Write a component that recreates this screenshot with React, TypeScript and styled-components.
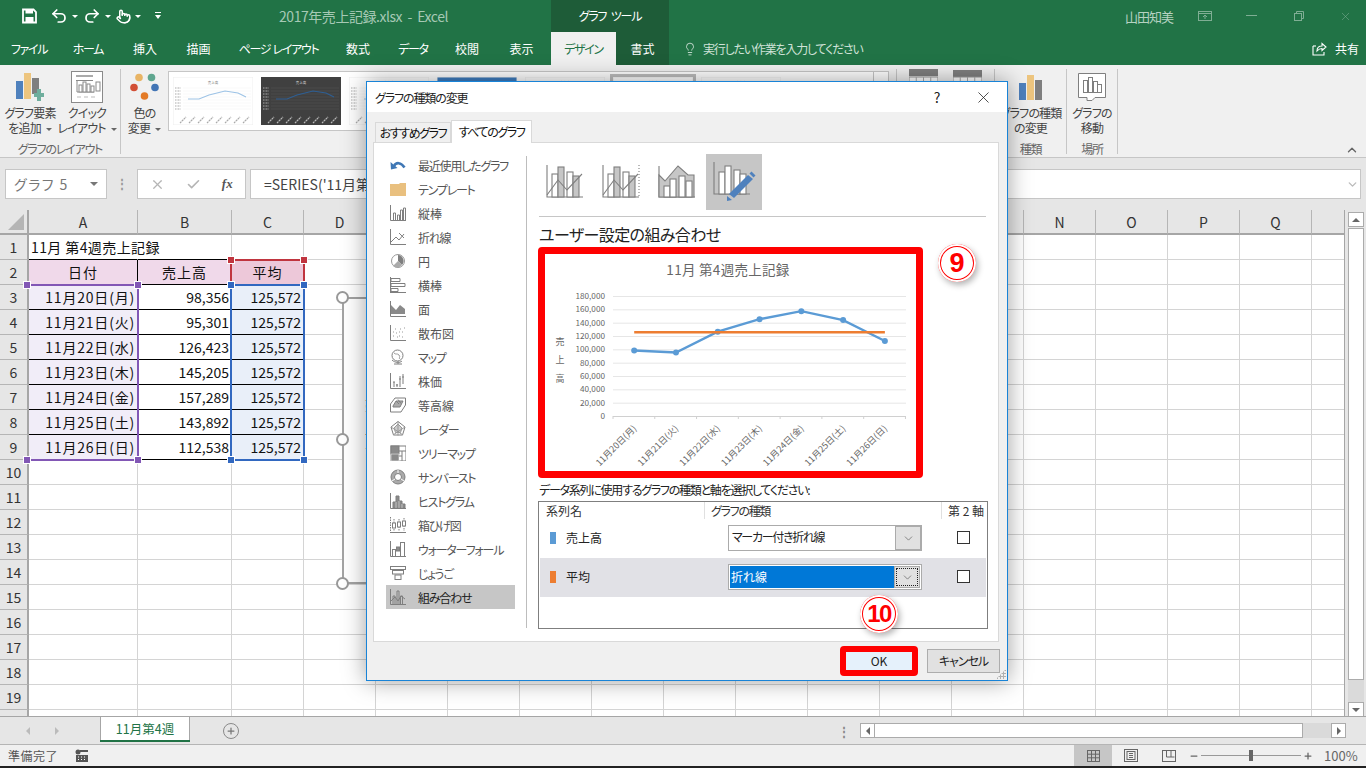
import React from "react";
import styled, { createGlobalStyle } from "styled-components";
import { Undo2, Redo2, Pointer, Lightbulb, X, ChevronDown, ChevronUp, Check, Plus, Minus } from "lucide-react";

const FONT = `"Noto Sans CJK JP", "Noto Sans", "Liberation Sans", sans-serif`;

const Global = createGlobalStyle`
  html, body { margin: 0; padding: 0; width: 1366px; height: 768px; overflow: hidden; background: #000; }
  body { font-family: ${FONT}; font-size: 12px; color: #444; font-feature-settings: "palt"; }
  * { box-sizing: border-box; }
`;

const Page = styled.div`
  position: relative; width: 1366px; height: 768px; overflow: hidden; display: flex; flex-direction: column;
  background: #f0f0f0;
`;
const Tight = styled.span<{ $ls?: number }>`
  letter-spacing: ${(p) => p.$ls ?? -1.2}px;
`;

/* ---------- title bar ---------- */
const TitleBar = styled.div`
  height: 32px; background: #217346; display: flex; align-items: center; color: #fff; flex: none;
`;
const Qat = styled.div`
  width: 279px; display: flex; align-items: center; padding-left: 22px; flex: none;
`;
const QatItem = styled.span<{ $w: number }>`
  width: ${(p) => p.$w}px; flex: none; display: flex; align-items: center; gap: 1px;
`;
const Caret = styled.span<{ $c?: string }>`
  width: 0; height: 0; border: 3px solid transparent; border-top: 3px solid ${(p) => p.$c || "#fff"}; border-bottom: 0;
  display: inline-block; margin-left: 3px; vertical-align: middle;
`;
const FileName = styled.div`
  width: 272px; flex: none; color: #a6c9b5; font-size: 14px; font-feature-settings: normal; letter-spacing: -0.45px; line-height: 32px;
`;
const ToolTitle = styled.div`
  width: 118px; flex: none; height: 32px; background: #1e5c38; color: #fff; text-align: center; line-height: 32px; font-size: 12px; letter-spacing: -1.2px; word-spacing: 3px;
`;
const UserName = styled.div`
  margin-left: 456px; width: 56px; flex: none; color: #b5d2c1; font-size: 13px; font-feature-settings: normal; letter-spacing: -1px;
`;
const WinButton = styled.div`
  width: 47px; flex: none; display: flex; justify-content: center; align-items: center; color: #7fae94;
`;

/* ---------- tabs ---------- */
const TabBar = styled.div`
  height: 33px; background: #217346; display: flex; flex: none; align-items: stretch; position: relative;
`;
const Tab = styled.div<{ $w: number; $active?: boolean; $dark?: boolean; $tight?: boolean }>`
  width: ${(p) => p.$w}px; flex: none; text-align: center; line-height: 34px; font-size: 12px; white-space: nowrap;
  letter-spacing: ${(p) => (p.$tight ? "-1.3px" : "0")}; word-spacing: 1px;
  color: ${(p) => (p.$active ? "#217346" : "#fff")};
  background: ${(p) => (p.$active ? "#f0f0f0" : p.$dark ? "#1e5c38" : "transparent")};
`;
const TellMe = styled.div`
  display: flex; align-items: center; gap: 6px; margin-left: 14px; color: #cfe2d7; font-size: 12px; white-space: nowrap; letter-spacing: -1.2px;
`;
const Share = styled.div`
  margin-left: auto; width: 54px; display: flex; align-items: center; gap: 8px; color: #fff; font-size: 12px;
`;

/* ---------- ribbon ---------- */
const Ribbon = styled.div`
  height: 93px; flex: none; display: flex; background: #f0f0f0; border-bottom: 1px solid #c6c6c6; position: relative;
`;
const Group = styled.div<{ $w: number }>`
  width: ${(p) => p.$w}px; flex: none; margin-top: 4px; height: 85px; border-right: 1px solid #c6c6c6;
  display: flex; flex-direction: column; position: relative;
`;
const GroupBody = styled.div`
  height: 73px; display: flex; align-items: flex-start; flex: none;
`;
const GroupLabel = styled.div`
  height: 14px; text-align: center; font-size: 12px; line-height: 14px; color: #666; letter-spacing: -1.2px; white-space: nowrap;
`;
const BigButton = styled.div<{ $w: number }>`
  width: ${(p) => p.$w}px; flex: none; display: flex; flex-direction: column; align-items: center; text-align: center;
  color: #444; font-size: 12px; line-height: 15px; white-space: nowrap; letter-spacing: -0.8px;
`;
const IconSlot = styled.div`
  height: 36px; display: flex; align-items: center; justify-content: center; flex: none;
`;
const Gallery = styled.div`
  width: 721px; height: 60px; flex: none; margin-top: 2px; background: #fff; border: 1px solid #c6c6c6;
  display: flex; align-items: flex-start; padding: 5px 0 0 4px; gap: 8px; overflow: hidden; position: relative;
`;
const Thumb = styled.div<{ $sel?: boolean }>`
  width: 80px; height: 48px; flex: none; position: relative;
  ${(p) => (p.$sel ? "outline: 3px solid #bdbdbd; outline-offset: 0;" : "")}
`;
const GalleryScroll = styled.div`
  position: absolute; right: 0; top: 0; bottom: 0; width: 15px; border-left: 1px solid #c6c6c6; background: #fff;
`;
const Collapse = styled.div`
  position: absolute; right: 7px; bottom: 0; color: #666; height: 14px;
`;

/* ---------- formula bar ---------- */
const FormulaBar = styled.div`
  height: 52px; flex: none; background: #e6e6e6; display: flex; padding: 11px 5px 0 5px; align-items: flex-start;
`;
const NameBox = styled.div`
  width: 102px; height: 30px; background: #fff; border: 1px solid #c6c6c6; display: flex; align-items: center;
  justify-content: space-between; padding: 0 8px; color: #777; font-size: 14px; letter-spacing: 1.5px; flex: none;
`;
const Dots = styled.div`
  width: 30px; flex: none; text-align: center; line-height: 28px; color: #999; font-weight: 700;
`;
const FxBox = styled.div`
  width: 109px; height: 30px; flex: none; background: #fff; border: 1px solid #c6c6c6; display: flex; align-items: center;
  justify-content: space-around; color: #b5b5b5; padding: 0 2px;
`;
const Fx = styled.span`
  font-family: "Liberation Serif", serif; font-style: italic; font-weight: 700; color: #555; font-size: 13px;
`;
const FormulaInput = styled.div`
  margin-left: 4px; flex: 1; height: 30px; background: #fff; border: 1px solid #c6c6c6; display: flex; align-items: center;
  padding: 0 1px 0 13px; font-size: 14px; color: #444; justify-content: space-between; font-feature-settings: normal;
`;

/* ---------- sheet ---------- */
const SheetArea = styled.div`
  height: 507px; flex: none; display: flex; background: #e6e6e6; position: relative;
`;
const Grid = styled.div`
  width: 1345px; flex: none; height: 507px; overflow: hidden; background: #fff; position: relative;
  display: grid; grid-template-columns: 29px 109px 94px repeat(15, 72px) 33px; grid-auto-rows: 25px;
  border-right: 1px solid #a6a6a6; border-bottom: 1px solid #a6a6a6;
`;
const Corner = styled.div`
  background: #e6e6e6; border-right: 2px solid #a6a6a6; border-bottom: 2px solid #a6a6a6; position: relative;
  &::after { content: ""; position: absolute; right: 3px; bottom: 3px; border: 8px solid #b5b5b5; border-left-color: transparent; border-top-color: transparent; }
`;
const ColHead = styled.div`
  background: #e6e6e6; border-right: 1px solid #b5b5b5; border-bottom: 2px solid #a6a6a6; text-align: center; line-height: 24px;
  font-size: 14px; color: #333; font-feature-settings: normal;
`;
const RowHead = styled.div`
  background: #e6e6e6; border-right: 2px solid #a6a6a6; border-bottom: 1px solid #b5b5b5; text-align: center; line-height: 24px;
  font-size: 14px; color: #333; font-feature-settings: normal;
`;
const Cell = styled.div<{ $bg?: string; $align?: string; $black?: boolean; $blackRight?: boolean; $ls?: number; $over?: boolean }>`
  background: ${(p) => p.$bg || "#fff"};
  border-right: 1px solid ${(p) => (p.$blackRight ? "#000" : "#d4d4d4")};
  border-bottom: 1px solid ${(p) => (p.$black ? "#000" : "#d4d4d4")};
  text-align: ${(p) => p.$align || "left"};
  letter-spacing: ${(p) => p.$ls ?? 0}px;
  ${(p) => (p.$over ? "position: relative; z-index: 1; border-right-color: transparent; background: transparent;" : "")}
  font-size: 14px; line-height: 24px; color: #111; white-space: nowrap; padding: 0 2px; font-feature-settings: normal;
`;
const Range = styled.div<{ $l: number; $t: number; $w: number; $h: number; $c: string; $noLeft?: boolean }>`
  position: absolute; left: ${(p) => p.$l}px; top: ${(p) => p.$t}px; width: ${(p) => p.$w}px; height: ${(p) => p.$h}px;
  z-index: 2; border: 2px solid ${(p) => p.$c}; ${(p) => (p.$noLeft ? "border-left-width: 0;" : "")}
`;
const RangeHandle = styled.div<{ $x: "l" | "r"; $y: "t" | "b"; $c: string }>`
  position: absolute; background: ${(p) => p.$c}; border: 1px solid #fff; box-sizing: content-box;
  ${(p) => (p.$x === "l" ? "left: -5px;" : "right: -5px;")}
  ${(p) => (p.$y === "t" ? "top: -5px;" : "bottom: -5px;")}
  width: 6px; height: 6px;
`;
const ChartObject = styled.div`
  position: absolute; left: 342px; top: 87px; width: 640px; height: 287px; background: #fff; border: 2px solid #a3a3a3; z-index: 2;
`;
const ChartHandle = styled.div<{ $t: number }>`
  position: absolute; left: -8px; top: ${(p) => p.$t}px; width: 13px; height: 13px; border-radius: 50%; background: #fff; border: 2px solid #999;
`;
const ChartAxisText = styled.div`
  position: absolute; left: 18px; top: 100px; writing-mode: vertical-rl; font-size: 13px; letter-spacing: 11px; color: #555;
`;
const VScroll = styled.div`
  width: 21px; flex: none; padding: 2px 2px 0 3px; display: flex; flex-direction: column; height: 507px;
`;
const ScrollBtn = styled.div`
  height: 15px; flex: none; background: #fff; border: 1px solid #ababab; display: flex; align-items: center; justify-content: center;
`;
const Tri = styled.span<{ $dir: "up" | "down" | "left" | "right"; $c?: string }>`
  width: 0; height: 0; border: 4px solid transparent; display: inline-block;
  ${(p) => {
    const c = p.$c || "#666";
    if (p.$dir === "up") return `border-top-width:0;border-bottom-color:${c};`;
    if (p.$dir === "down") return `border-bottom-width:0;border-top-color:${c};`;
    if (p.$dir === "left") return `border-left-width:0;border-right-color:${c};`;
    return `border-right-width:0;border-left-color:${c};`;
  }}
`;
const VThumb = styled.div`
  height: 452px; flex: none; margin-top: 1px; background: #fff; border: 1px solid #ababab;
`;
const VTrack = styled.div`
  flex: 1; background: #dadada;
`;

/* ---------- sheet tabs ---------- */
const SheetTabs = styled.div`
  height: 29px; flex: none; background: #e6e6e6; border-bottom: 1px solid #b5b5b5; display: flex; align-items: flex-start; margin-top: -1px; position: relative;
`;
const NavArrows = styled.div`
  width: 100px; height: 28px; display: flex; align-items: center; padding-left: 26px; gap: 25px; flex: none; border-top: 1px solid #a6a6a6;
`;
const SheetTab = styled.div`
  width: 90px; height: 24px; flex: none; background: #fff; border: 1px solid #a6a6a6; border-bottom: 0; color: #217346;
  text-align: center; font-size: 12.5px; line-height: 24px; box-shadow: 0 2px 0 #217346; font-feature-settings: normal;
`;
const TabsRest = styled.div`
  flex: 1; height: 28px; border-top: 1px solid #a6a6a6; display: flex; align-items: center;
`;
const AddSheet = styled.div`
  margin-left: 33px; width: 16px; height: 16px; border-radius: 50%; border: 1.5px solid #8a8a8a; color: #777; display: flex; align-items: center; justify-content: center;
`;
const SplitDots = styled.div`
  margin-left: 597px; width: 16px; color: #888; font-weight: 700; line-height: 14px; text-align: center;
`;
const HScroll = styled.div`
  width: 486px; margin-left: 8px; height: 15px; display: flex; align-items: stretch; flex: none;
`;
const HBtn = styled.div`
  width: 15px; flex: none; background: #fff; border: 1px solid #ababab; display: flex; align-items: center; justify-content: center;
`;
const HThumb = styled.div`
  width: 428px; flex: none; background: #fff; border: 1px solid #ababab; border-left: 0;
`;
const HTrack = styled.div`
  width: 28px; flex: none; background: #dadada;
`;

/* ---------- status bar ---------- */
const StatusBar = styled.div`
  height: 21px; flex: none; background: #f0f0f0; display: flex; align-items: center; padding-left: 8px; color: #555; font-size: 12px;
`;
const ReadyText = styled.div`
  width: 67px; flex: none; font-feature-settings: normal; letter-spacing: 0.5px;
`;
const ViewGroup = styled.div`
  margin-left: 985px; display: flex; flex: none;
`;
const ViewBtn = styled.div<{ $active?: boolean }>`
  width: 38px; height: 21px; flex: none; display: flex; align-items: center; justify-content: center;
  background: ${(p) => (p.$active ? "#c6c6c6" : "transparent")};
`;
const ZoomGroup = styled.div`
  margin-left: 1px; display: flex; align-items: center; color: #666; flex: none;
`;
const ZoomSlider = styled.div`
  width: 100px; height: 1px; background: #999; margin: 0 2px 0 2px; position: relative; flex: none;
`;
const ZoomKnob = styled.div`
  position: absolute; left: 48px; top: -5px; width: 4px; height: 11px; background: #666;
`;
const ZoomText = styled.div`
  margin-left: 11px; font-size: 13px; color: #666; font-feature-settings: normal;
`;
const BottomEdge = styled.div`
  height: 2px; flex: none; background: #222;
`;

/* ---------- dialog ---------- */
const Dialog = styled.div`
  position: absolute; left: 366px; top: 81px; width: 642px; height: 600px; background: #f0f0f0; border: 1px solid #1883d7;
  box-shadow: 0 0 22px rgba(0, 0, 0, 0.38); display: flex; flex-direction: column; z-index: 5;
`;
const DialogTitle = styled.div`
  height: 30px; flex: none; background: #fff; display: flex; align-items: center; padding-left: 8px; font-size: 12px; color: #222; position: relative;
`;
const DialogHelp = styled.div`
  margin-left: auto; width: 46px; text-align: center; font-size: 14px; color: #222;
`;
const DialogClose = styled.div`
  width: 46px; display: flex; justify-content: center; color: #222; margin-right: 1px;
`;
const DialogTabs = styled.div`
  height: 30px; flex: none; display: flex; align-items: flex-end; padding-left: 8px; position: relative; z-index: 1;
`;
const DialogTab = styled.div<{ $active?: boolean }>`
  height: ${(p) => (p.$active ? 23 : 20)}px; font-size: 12px; line-height: ${(p) => (p.$active ? 22 : 20)}px; letter-spacing: -1.4px;
  color: #111; background: ${(p) => (p.$active ? "#fff" : "#f0f0f0")}; text-align: center; white-space: nowrap;
  border: 1px solid #d9d9d9; border-bottom: 0;
  width: ${(p) => (p.$active ? 81 : 76)}px; margin-bottom: ${(p) => (p.$active ? -1 : 0)}px;
`;
const DialogPanel = styled.div`
  height: 500px; flex: none; margin: 0 8px 0 6px; background: #fff; border: 1px solid #d9d9d9; display: flex;
`;
const ListColumn = styled.div`
  width: 152px; flex: none; padding: 10px 0 0 12px;
`;
const ListItem = styled.div<{ $sel?: boolean }>`
  width: 129px; height: 24px; display: flex; align-items: center; gap: 12px; padding-left: 4px;
  background: ${(p) => (p.$sel ? "#c6c6c6" : "transparent")}; color: ${(p) => (p.$sel ? "#222" : "#555")};
  font-size: 12px; white-space: nowrap;
  & > svg { flex: none; }
`;
const VDivider = styled.div`
  width: 1px; flex: none; margin: 13px 0; background: #bdbdbd;
`;
const RightColumn = styled.div`
  flex: 1; min-width: 0; padding: 11px 12px 0 12px; position: relative;
`;
const TypeRow = styled.div`
  height: 56px; display: flex; margin-left: -1px;
`;
const TypeButton = styled.div<{ $sel?: boolean }>`
  width: 56px; height: 56px; flex: none; display: flex; align-items: center; justify-content: center;
  background: ${(p) => (p.$sel ? "#c6c6c6" : "transparent")};
`;
const HRule = styled.div`
  height: 1px; margin-top: 6px; background: #c6c6c6;
`;
const Heading = styled.div`
  margin-top: 7px; height: 20px; line-height: 20px; font-size: 16px; color: #222; white-space: nowrap; letter-spacing: -0.6px;
`;
const Preview = styled.div`
  margin: 3px 0 0 -1px; width: 385px; height: 231px; border: 7px solid #ff0000; border-radius: 4px; background: #fff; flex: none;
  & > svg { display: block; }
`;
const Badge = styled.div<{ $l: number; $t: number; $small?: boolean }>`
  position: absolute; left: ${(p) => p.$l}px; top: ${(p) => p.$t}px; width: 38px; height: 38px; border-radius: 50%;
  background: #fff; box-shadow: inset 0 0 0 2px #fff, inset 0 0 0 3px #ff0000, 2px 3px 6px rgba(0, 0, 0, 0.3);
  font-family: "Liberation Sans", sans-serif; font-weight: 700; text-align: center; line-height: 38px;
  font-size: ${(p) => (p.$small ? 24 : 27)}px; letter-spacing: ${(p) => (p.$small ? -1.5 : 0)}px; color: #f00;
  z-index: 3;
`;
const SeriesLabel = styled.div`
  margin-top: 4px; height: 16px; line-height: 16px; font-size: 12px; color: #222; white-space: nowrap; letter-spacing: -1.25px;
`;
const SeriesTable = styled.div`
  margin: 3px 0 0 -1px; width: 450px; height: 128px; border: 1px solid #7f7f7f; font-size: 12px; color: #333;
`;
const SeriesHeader = styled.div`
  height: 17px; display: grid; grid-template-columns: 165px 237px 46px; line-height: 17px; white-space: nowrap;
`;
const HeaderCell = styled.div<{ $sep?: boolean; $pl: number }>`
  padding-left: ${(p) => p.$pl}px; ${(p) => (p.$sep ? "border-left: 1px solid #e0e0e0;" : "")}
`;
const SeriesRow = styled.div<{ $sel?: boolean }>`
  height: 39px; margin: 0 1px; display: grid; grid-template-columns: 164px 237px 45px; align-items: center;
  background: ${(p) => (p.$sel ? "#e1e1e6" : "transparent")};
`;
const SeriesName = styled.div`
  display: flex; align-items: center; gap: 10px; padding-left: 10px; color: #222; margin-bottom: 2px;
`;
const Swatch = styled.span<{ $c: string }>`
  width: 6px; height: 12px; background: ${(p) => p.$c}; flex: none;
`;
const Combo = styled.div<{ $sel?: boolean }>`
  margin: 0 0 1px 24px; width: 194px; height: 26px; border: 1px solid #ababab; display: flex; background: #fff;
  padding: ${(p) => (p.$sel ? "1px" : "0")};
  font-size: 12px;
`;
const ComboText = styled.div<{ $sel?: boolean }>`
  flex: 1; line-height: ${(p) => (p.$sel ? 21 : 22)}px; padding-left: ${(p) => (p.$sel ? 1 : 3)}px;
  background: ${(p) => (p.$sel ? "#0078d7" : "#fff")}; color: ${(p) => (p.$sel ? "#fff" : "#222")};
`;
const ComboBtn = styled.div<{ $focus?: boolean }>`
  width: 26px; flex: none; background: #e1e1e1; border: 1px solid #ababab; display: flex; align-items: center; justify-content: center; color: #555;
  ${(p) => (p.$focus ? "outline: 1px dotted #222; outline-offset: -3px;" : "")}
`;
const CheckBox = styled.div`
  width: 13px; height: 13px; background: #fff; border: 1px solid #333; justify-self: center; margin-bottom: 3px;
`;
const DialogFooter = styled.div`
  flex: 1; display: flex; justify-content: flex-end; align-items: center; padding-right: 7px; gap: 9px; position: relative;
`;
const OkButton = styled.div`
  width: 78px; height: 30px; background: #e5f1fb; border: 6px solid #ff0000; border-radius: 4px; text-align: center; line-height: 18px; color: #222; font-size: 12px;
`;
const CancelButton = styled.div`
  width: 73px; height: 24px; background: #e1e1e1; border: 1px solid #adadad; text-align: center; line-height: 22px; color: #222; font-size: 12px; letter-spacing: -1px;
`;
const Grip = styled.div`
  position: absolute; right: 1px; bottom: 1px; width: 10px; height: 10px;
  background-image: radial-gradient(#b0b0b0 1px, transparent 1.2px); background-size: 3px 3px;
  clip-path: polygon(100% 0, 100% 100%, 0 100%);
`;
const ChartSvg = styled.svg`
  font-family: ${FONT}; font-feature-settings: normal;
`;

/* ---------- icons ---------- */
const SaveIcon = () => (
  <svg width="15" height="16" viewBox="0 0 15 16" fill="none">
    <path d="M1 1.5h10.5L14 4v10.5H1z" stroke="#fff" strokeWidth="1.8" />
    <rect x="3.5" y="1.5" width="7.5" height="4" fill="#fff" />
    <rect x="3.5" y="9" width="8" height="5.5" fill="#fff" />
  </svg>
);
const QatMore = () => (
  <svg width="8" height="8" viewBox="0 0 8 8"><rect x="1" y="0" width="6" height="1" fill="#fff" /><path d="M1 3h6L4 7z" fill="#fff" /></svg>
);
const ShareIcon = () => (
  <svg width="15" height="15" viewBox="0 0 15 15" fill="none" stroke="#fff" strokeWidth="1.1">
    <path d="M1 5v9h11v-3" /><path d="M1 5h3" /><path d="M5 10c0-3.500 2-5 5-5V2.500L14 6l-4 3.500V7.500c-2 0-3.500.8-5 2.500z" />
  </svg>
);
const AddElementIcon = () => (
  <svg width="30" height="28" viewBox="0 0 30 28">
    <rect x="1" y="8" width="7" height="18" fill="#4f81bd" /><rect x="9" y="0" width="7" height="26" fill="#edc57f" />
    <rect x="17" y="5" width="7" height="16" fill="#7f7f7f" /><path d="M19 20h3v-4h4v4h3v4h-3v4h-4v-4h-3z" fill="#6fae9d" />
  </svg>
);
const QuickLayoutIcon = () => (
  <svg width="33" height="33" viewBox="0 0 33 33" fill="#fff" stroke="#8a8a8a">
    <rect x=".5" y=".5" width="31" height="31" /><path d="M5 5h17" strokeWidth="2" stroke="#aaa" />
    <path d="M5 9.500h17M6 10v11M6 21h17" /><rect x="8" y="14" width="3" height="7" /><rect x="12" y="11" width="3" height="10" /><rect x="16" y="13" width="3" height="8" /><rect x="20" y="15" width="3" height="6" />
    <rect x="25" y="11" width="4" height="9" /><path d="M6 26h4M13 26h4M20 26h4" stroke="#bbb" />
  </svg>
);
const PaletteIcon = () => (
  <svg width="30" height="28" viewBox="0 0 30 28">
    <circle cx="9" cy="4.500" r="3.800" fill="#e8b465" /><circle cx="21.500" cy="4.500" r="3.800" fill="#5fa68f" />
    <circle cx="4" cy="14.500" r="3.800" fill="#d24f35" /><circle cx="25" cy="14.500" r="3.800" fill="#4275b5" /><circle cx="14.500" cy="23" r="3.800" fill="#e37a26" />
  </svg>
);
const ChangeTypeIcon = () => (
  <svg width="24" height="27" viewBox="0 0 24 27">
    <rect y="9" width="7" height="17" fill="#4f81bd" /><rect x="8" y="1" width="7" height="25" fill="#edc57f" /><rect x="16" y="6" width="7" height="20" fill="#7f7f7f" />
  </svg>
);
const MoveChartIcon = () => (
  <svg width="29" height="29" viewBox="0 0 29 29" fill="#fff" stroke="#7f7f7f">
    <path d="M.5 .5h27v24H17l-3 3H9v-3H.500z" /><rect x="5.500" y="7.500" width="4" height="12" /><rect x="10.500" y="4.500" width="4" height="15" /><rect x="15.500" y="8.500" width="4" height="11" /><rect x="19.500" y="11.500" width="4" height="8" />
  </svg>
);
const TableIcon = ({ w, arrow }: { w: number; arrow?: boolean }) => (
  <svg width={w} height="30" viewBox={`0 0 ${w} 30`}>
    <rect width={w} height="7" y={arrow ? 0 : 1} fill="#7f7f7f" />
    <rect y="8" width={w} height="22" fill="#fff" stroke="#999" />
    <path d={`M${w / 4} 8v22M${w / 2} 8v22M${(w * 3) / 4} 8v22`} stroke="#aaa" />
  </svg>
);
const MiniChart = ({ dark, color, bg }: { dark?: boolean; color: string; bg?: string }) => (
  <svg width="80" height="48" viewBox="0 0 80 48">
    <rect width="80" height="48" fill={bg || (dark ? "#404040" : "#fff")} stroke={dark ? "none" : "#eee"} />
    <text x="40" y="7" fontSize="3.500" textAnchor="middle" fill={dark ? "#ddd" : "#777"} fontFamily={FONT}>売上高</text>
    {[11, 14, 17, 20, 23, 26, 29, 32].map((y) => (
      <g key={y}>
        <path d={`M2 ${y}h6`} stroke="#aaa" strokeWidth="1.200" strokeDasharray="1 .5" />
        <path d={`M10 ${y}h68`} stroke={dark ? "#555" : "#f0f0f0"} strokeWidth=".5" />
      </g>
    ))}
    <path d="M15 22 L26 22 L36 18 L52 14 L65 16 L73 20" stroke={color} strokeWidth="1.100" fill="none" />
    {[12, 21, 30, 39, 48, 57, 66, 75].map((x) => (
      <path key={x} d={`M${x - 5} 46l6-6`} stroke={dark ? "#bbb" : "#aaa"} strokeWidth="1.200" strokeDasharray="2 .6" />
    ))}
  </svg>
);

const IconFrame = ({ children }: { children: React.ReactNode }) => (
  <svg width="16" height="16" viewBox="0 0 16 16" fill="none" stroke="#7f7f7f" strokeWidth="1">{children}</svg>
);
const axis = <path d="M.5 0v15.500H16" />;
const icons: Record<string, React.ReactNode> = {
  recent: <><path d="M4 9C6 5 11 5 14.500 10.500" stroke="#3f77b5" strokeWidth="2.600" /><path d="M.5 5 7.500 11 1 12.500z" fill="#3f77b5" stroke="none" /></>,
  folder: <path d="M0 3h9l1-1h6v13H0z" fill="#e9c07f" stroke="none" />,
  column: <>{axis}<path d="M3.500 15V8h2v7M7.500 15V10h2v5M10.500 15V5h2v10M13.500 15V3h2v12" /></>,
  line: <>{axis}<path d="M1 13l5-5 3 3 5-6M9 4l5 5" /></>,
  pie: <><circle cx="8" cy="8" r="6.500" stroke="#999" /><path d="M8 8V2a6 6 0 0 1 4 10z" fill="#7f7f7f" stroke="none" /><path d="M8 8l4 4a6 6 0 0 1-9 1" fill="#aaa" stroke="none" /></>,
  bar: <><path d="M.5 0v16" /><path d="M1 1.500h9v3H1zM1 6.500h14v3H1zM1 11.500h7v3H1z" fill="#fff" /><path d="M0 15.500h16" /></>,
  area: <><path d="M.5 0v15.500H16" /><path d="M1 4l5 5 4-5 5 4v5H1z" fill="#8a8a8a" stroke="none" /></>,
  scatter: <>{axis}<path d="M3 11h1M6 8h1M9 11h1M12 7h1M5 4h1M10 4h1M14 3h1M3 7h1M7 12h1M12 12h1M9 7h1" stroke="#999" /></>,
  map: <><circle cx="7.500" cy="6.500" r="5.500" /><path d="M4 4c2 2 3 0 5 2s-1 3 1 4" stroke="#999" /><path d="M4 15h8M8 12v3M2 11c3 3 8 3 10 1" /></>,
  stock: <>{axis}<path d="M4 9v5M7 11v3M10 3v11M13 1v10M3 9h2M6 12h2M9 6h2M12 4h2" /></>,
  contour: <><path d="M.5 7 5 1h10.500v7L11 15H.5z" /><path d="M3 9l3-5h7l-3 6H3z" fill="#aaa" stroke="#7f7f7f" /><path d="M6 4l3 3M8 2.500l3 4" /></>,
  radar: <><path d="M8 .5l7 5.500-2.500 8h-9L1 6z" /><path d="M8 3l4 4-1.500 4.500h-5L4 7z" fill="#ccc" stroke="#999" /><path d="M8 .5v14M1 6l12 8M15 6 3 14" stroke="#999" /></>,
  tree: <><rect x="1" y="1" width="15" height="15" fill="#fff" /><rect x="1" y="1" width="8" height="8" fill="#8a8a8a" stroke="#7f7f7f" /><rect x="1" y="9" width="8" height="7" fill="#8a8a8a" stroke="#fff" strokeWidth=".5" /><path d="M9 6h7M12 6v10M9 11h3" /></>,
  sun: <><circle cx="8" cy="8" r="7" fill="#aaa" /><circle cx="8" cy="8" r="3.500" fill="#fff" /><path d="M8 1v3M2 12l3-2M14 12l-3-2" stroke="#fff" /></>,
  hist: <>{axis}<path d="M3 15V9h3V3h3v5h3v3h3v4z" fill="#8a8a8a" /><path d="M6 9v6M9 8v7M12 11v4" stroke="#fff" strokeWidth=".5" /></>,
  box: <><path d="M0 15.500h16" /><path d="M.5 0v15.500M4 2v12M9 2v12M14 1v13" strokeDasharray="1.500 1" /><rect x="2.500" y="6" width="3" height="5" fill="#fff" /><rect x="7.500" y="5" width="3" height="5" fill="#fff" /><rect x="12.500" y="4" width="3" height="5" fill="#fff" /></>,
  water: <>{axis}<rect x="2.500" y="8.500" width="3" height="7" fill="#fff" /><rect x="6.500" y="6" width="3" height="4" fill="#8a8a8a" /><rect x="10.500" y="1.500" width="4" height="14" fill="#fff" /></>,
  funnel: <><rect x=".5" y="1.500" width="15" height="3" /><rect x="2.500" y="5.500" width="11" height="3.500" /><rect x="5" y="10" width="6" height="4.500" /></>,
  combo: <>{axis}<path d="M3 15V7h2v8M7 15V2h2v13M10.500 15V7h2v8" /><path d="M1 12l4-4 3 4 3-5 4 3" /></>,
};
const listItems: [string, string][] = [
  ["recent", "最近使用したグラフ"], ["folder", "テンプレート"], ["column", "縦棒"], ["line", "折れ線"], ["pie", "円"], ["bar", "横棒"],
  ["area", "面"], ["scatter", "散布図"], ["map", "マップ"], ["stock", "株価"], ["contour", "等高線"], ["radar", "レーダー"],
  ["tree", "ツリーマップ"], ["sun", "サンバースト"], ["hist", "ヒストグラム"], ["box", "箱ひげ図"], ["water", "ウォーターフォール"], ["funnel", "じょうご"], ["combo", "組み合わせ"],
];
const hasKana = (s: string) => /[ぁ-んァ-ン]/.test(s);

const ComboTypeIcon = ({ kind }: { kind: number }) => (
  <svg width="40" height="34" viewBox="0 0 40 34" fill="none" stroke="#7f7f7f" strokeWidth="1.100">
    {kind === 2 ? (
      <>
        <path d="M1 1v31h36" />
        <path d="M1 10l6 6L20 1l10 9h6v22H1z" fill="#c6c6c6" />
        <rect x="6" y="21" width="6" height="11" fill="#fff" /><rect x="12" y="14" width="6" height="18" fill="#fff" /><rect x="21" y="11" width="6" height="21" fill="#fff" /><rect x="28" y="16" width="6" height="16" fill="#fff" />
      </>
    ) : (
      <>
        <path d="M1 0v32h36" />
        <rect x="6" y="9" width="6" height="23" fill="#fff" /><rect x="12" y="2" width="6" height="30" fill="#c6c6c6" /><rect x="21" y="7" width="6" height="25" fill="#fff" /><rect x="27" y="11" width="6" height="21" fill="#c6c6c6" />
        <path d="M1 30l11-15 9 10 15-16" />
        {kind === 1 && <path d="M37 0v32" strokeDasharray="1 2" />}
      </>
    )}
  </svg>
);
const CustomComboIcon = () => (
  <svg width="44" height="42" viewBox="0 0 44 42" fill="none" stroke="#7f7f7f" strokeWidth="1.100">
    <path d="M2 1v32h36" /><rect x="7" y="11" width="6" height="22" fill="#fff" /><rect x="13" y="5" width="6" height="28" fill="#fff" /><rect x="22" y="9" width="6" height="24" fill="#fff" /><rect x="28" y="13" width="6" height="20" fill="#fff" />
    <path d="M17 33 36 14l5 4L22 37z" fill="#4f81bd" stroke="none" /><path d="M37.500 12.500l2-2 4 4-2 2z" fill="#4f81bd" stroke="none" /><path d="M15 35v5l5-1z" fill="#4f81bd" stroke="none" />
  </svg>
);

/* ---------- data ---------- */
const dates = ["11月20日(月)", "11月21日(火)", "11月22日(水)", "11月23日(木)", "11月24日(金)", "11月25日(土)", "11月26日(日)"];
const sales = [98356, 95301, 126423, 145205, 157289, 143892, 112538];
const colLetters = "ABCDEFGHIJKLMNOPQR".split("");

const PX = (i: number) => 89.2 + i * 41.78;
const PY = (v: number) => 162 - (v / 180000) * 120;

const PreviewChart = () => (
  <ChartSvg width="371" height="217" viewBox="0 0 371 217">
    <text x="183" y="21" fontSize="13.500" fill="#666" textAnchor="middle" letterSpacing=".3">11月 第4週売上記録</text>
    {Array.from({ length: 10 }).map((_, i) => {
      const v = i * 20000;
      return (
        <g key={i}>
          <line x1="68" x2="361" y1={PY(v) + 0.5} y2={PY(v) + 0.5} stroke={i === 0 ? "#d0d0d0" : "#e6e6e6"} />
          <text x="60" y={PY(v) + 3} fontSize="8.200" fill="#666" textAnchor="end">{v.toLocaleString("en-US")}</text>
        </g>
      );
    })}
    {Array.from({ length: 8 }).map((_, i) => (
      <line key={i} x1={68 + i * 41.78} x2={68 + i * 41.78} y1="162" y2="165" stroke="#d0d0d0" />
    ))}
    <text x="15" y="91" fontSize="9" fill="#666" textAnchor="middle">売</text>
    <text x="15" y="109" fontSize="9" fill="#666" textAnchor="middle">上</text>
    <text x="15" y="128" fontSize="9" fill="#666" textAnchor="middle">高</text>
    <polyline points={sales.map((v, i) => `${PX(i)},${PY(v)}`).join(" ")} fill="none" stroke="#5b9bd5" strokeWidth="2.400" />
    {sales.map((v, i) => <circle key={i} cx={PX(i)} cy={PY(v)} r="3" fill="#5b9bd5" />)}
    <line x1={PX(0)} x2={PX(6)} y1={PY(125572)} y2={PY(125572)} stroke="#ed7d31" strokeWidth="2.400" />
    {dates.map((d, i) => (
      <text key={d} fontSize="9" fill="#666" textAnchor="end" transform={`translate(${PX(i) + 3} 175) rotate(-45)`}>{d}</text>
    ))}
  </ChartSvg>
);

const cellsFor = (row: number) => {
  const out: React.ReactNode[] = [<RowHead key={`h${row}`}>{row}</RowHead>];
  colLetters.forEach((c, i) => {
    const inTable = i < 3;
    let text: string = "";
    let bg: string | undefined;
    let align = "left";
    let black = false;
    let blackRight = false;
    let ls = 0;
    if (row === 1 && i === 0) { text = "11月 第4週売上記録"; ls = 0.4; }
    if (row === 1 && inTable) black = i < 2;
    if (row >= 2 && row <= 9 && inTable) { black = true; blackRight = true; }
    if (row === 2 && inTable) {
      text = ["日付", "売上高", "平均"][i];
      align = "center";
      bg = i === 2 ? "#edc8d9" : "#f0d9ea";
      ls = 1;
    }
    if (row >= 3 && row <= 9 && inTable) {
      align = "right";
      if (i === 0) { text = dates[row - 3]; bg = "#f1edf8"; ls = 0.8; }
      if (i === 1) text = sales[row - 3].toLocaleString("en-US");
      if (i === 2) { text = "125,572"; bg = "#e9eff9"; }
    }
    out.push(<Cell key={`${c}${row}`} $bg={bg} $align={align} $black={black} $blackRight={blackRight} $ls={ls} $over={row === 1 && i === 0}>{text}</Cell>);
  });
  return out;
};

const corners: ["l" | "r", "t" | "b"][] = [["l", "t"], ["r", "t"], ["l", "b"], ["r", "b"]];

export default function App() {
  return (
    <Page>
      <Global />
      <TitleBar>
        <Qat>
          <QatItem $w={28}><SaveIcon /></QatItem>
          <QatItem $w={33}><Undo2 size={18} color="#fff" strokeWidth={2.3} /><Caret /></QatItem>
          <QatItem $w={33}><Redo2 size={18} color="#fff" strokeWidth={2.3} /><Caret /></QatItem>
          <QatItem $w={38}><Pointer size={15} color="#fff" strokeWidth={2.4} /><Caret /></QatItem>
          <QatItem $w={12}><QatMore /></QatItem>
        </Qat>
        <FileName>2017年売上記録.xlsx&nbsp;&nbsp;-&nbsp;&nbsp;Excel</FileName>
        <ToolTitle>グラフ ツール</ToolTitle>
        <UserName>山田知美</UserName>
        <WinButton>
          <svg width="14" height="11" viewBox="0 0 14 11" fill="none" stroke="#7fae94"><rect x=".5" y=".5" width="13" height="9" /><path d="M.5 2.500h13M7 8V4M5 6l2-2 2 2" /></svg>
        </WinButton>
        <WinButton><svg width="11" height="2"><rect width="11" height="1" fill="#7fae94" /></svg></WinButton>
        <WinButton>
          <svg width="10" height="10" viewBox="0 0 10 10" fill="none" stroke="#7fae94"><rect x=".5" y="2.500" width="7" height="7" /><path d="M2.500 2.500v-2h7v7h-2" /></svg>
        </WinButton>
        <WinButton><X size={13} strokeWidth={1} color="#7fae94" /></WinButton>
      </TitleBar>

      <TabBar>
        <Tab $w={58} $tight>ファイル</Tab>
        <Tab $w={60} $tight>ホーム</Tab>
        <Tab $w={54}>挿入</Tab>
        <Tab $w={53}>描画</Tab>
        <Tab $w={107} $tight>ページ レイアウト</Tab>
        <Tab $w={52}>数式</Tab>
        <Tab $w={58} $tight>データ</Tab>
        <Tab $w={50}>校閲</Tab>
        <Tab $w={59}>表示</Tab>
        <Tab $w={65} $active $tight>デザイン</Tab>
        <Tab $w={53} $dark>書式</Tab>
        <TellMe><Lightbulb size={14} strokeWidth={1.2} color="#fff" />実行したい作業を入力してください</TellMe>
        <Share><ShareIcon />共有</Share>
      </TabBar>

      <Ribbon>
        <Group $w={121}>
          <GroupBody>
            <BigButton $w={60}><IconSlot><AddElementIcon /></IconSlot>グラフ要素<span>を追加 <Caret $c="#666" /></span></BigButton>
            <BigButton $w={54}><IconSlot><QuickLayoutIcon /></IconSlot>クイック<span>レイアウト <Caret $c="#666" /></span></BigButton>
          </GroupBody>
          <GroupLabel>グラフのレイアウト</GroupLabel>
        </Group>
        <Group $w={776}>
          <GroupBody>
            <BigButton $w={47}><IconSlot><PaletteIcon /></IconSlot>色の<span>変更 <Caret $c="#666" /></span></BigButton>
            <Gallery>
              <Thumb><MiniChart color="#9dc3e6" /></Thumb>
              <Thumb><MiniChart dark color="#2e5f94" /></Thumb>
              <Thumb><MiniChart color="#9dc3e6" /></Thumb>
              <Thumb><MiniChart color="#fff" bg="#3f7ec1" /></Thumb>
              <Thumb><MiniChart color="#9dc3e6" /></Thumb>
              <Thumb $sel><MiniChart color="#9dc3e6" /></Thumb>
              <Thumb><MiniChart color="#9dc3e6" /></Thumb>
              <GalleryScroll />
            </Gallery>
          </GroupBody>
        </Group>
        <Group $w={98}>
          <GroupBody>
            <BigButton $w={12} />
            <BigButton $w={29}><TableIcon w={29} arrow /></BigButton>
            <BigButton $w={15} />
            <BigButton $w={29}><TableIcon w={29} /></BigButton>
          </GroupBody>
        </Group>
        <Group $w={72}>
          <GroupBody>
            <BigButton $w={71}><IconSlot><ChangeTypeIcon /></IconSlot>グラフの種類<span>の変更</span></BigButton>
          </GroupBody>
          <GroupLabel>種類</GroupLabel>
        </Group>
        <Group $w={51}>
          <GroupBody>
            <BigButton $w={50}><IconSlot><MoveChartIcon /></IconSlot>グラフの<span>移動</span></BigButton>
          </GroupBody>
          <GroupLabel>場所</GroupLabel>
        </Group>
        <Collapse><ChevronUp size={14} strokeWidth={2.4} /></Collapse>
      </Ribbon>

      <FormulaBar>
        <NameBox>グラフ 5<Tri $dir="down" $c="#777" /></NameBox>
        <Dots>⋮</Dots>
        <FxBox><X size={15} strokeWidth={2} /><Check size={15} strokeWidth={2.6} /><Fx>fx</Fx></FxBox>
        <FormulaInput>=SERIES('11月第4週<ChevronDown size={13} color="#bbb" strokeWidth={2.5} /></FormulaInput>
      </FormulaBar>

      <SheetArea>
        <Grid>
          <Corner />
          {colLetters.map((c) => <ColHead key={c}>{c === "R" ? "" : c}</ColHead>)}
          {Array.from({ length: 20 }).map((_, i) => cellsFor(i + 1))}
          <Range $l={28} $t={74} $w={111} $h={177} $c="#8257b5" $noLeft>
            {corners.map(([x, y]) => <RangeHandle key={x + y} $x={x} $y={y} $c="#8257b5" />)}
          </Range>
          <Range $l={230} $t={49} $w={75} $h={27} $c="#c0353f">
            {corners.slice(0, 2).map(([x, y]) => <RangeHandle key={x + y} $x={x} $y={y} $c="#c0353f" />)}
          </Range>
          <Range $l={230} $t={74} $w={75} $h={177} $c="#3268c0">
            {corners.map(([x, y]) => <RangeHandle key={x + y} $x={x} $y={y} $c="#3268c0" />)}
          </Range>
          <ChartObject>
            <ChartHandle $t={-8} />
            <ChartHandle $t={134} />
            <ChartHandle $t={278} />
            <ChartAxisText>売上高</ChartAxisText>
          </ChartObject>
        </Grid>
        <VScroll>
          <ScrollBtn><Tri $dir="up" /></ScrollBtn>
          <VThumb />
          <VTrack />
          <ScrollBtn><Tri $dir="down" /></ScrollBtn>
        </VScroll>
      </SheetArea>

      <SheetTabs>
        <NavArrows><Tri $dir="left" $c="#bbb" /><Tri $dir="right" $c="#bbb" /></NavArrows>
        <SheetTab>11月第4週</SheetTab>
        <TabsRest>
          <AddSheet><Plus size={10} strokeWidth={3} /></AddSheet>
          <SplitDots>⋮</SplitDots>
          <HScroll>
            <HBtn><Tri $dir="left" /></HBtn>
            <HThumb />
            <HTrack />
            <HBtn><Tri $dir="right" /></HBtn>
          </HScroll>
        </TabsRest>
      </SheetTabs>

      <StatusBar>
        <ReadyText>準備完了</ReadyText>
        <svg width="14" height="14" viewBox="0 0 14 14"><circle cx="3" cy="3" r="2.500" fill="#555" /><path d="M5 1h8v2H5zM1 6h12v7H1z" fill="#555" /><path d="M3 8h1M6 8h1M9 8h1M3 10.500h1M6 10.500h1M9 10.500h1" stroke="#fff" /></svg>
        <ViewGroup>
          <ViewBtn $active>
            <svg width="13" height="12" viewBox="0 0 13 12" fill="none" stroke="#666"><rect x=".5" y=".5" width="12" height="11" /><path d="M4.500 1v10M8.500 1v10M1 4.200h11M1 7.800h11" /></svg>
          </ViewBtn>
          <ViewBtn>
            <svg width="14" height="13" viewBox="0 0 14 13" fill="none" stroke="#666"><rect x=".5" y=".5" width="13" height="12" /><rect x="3" y="2.500" width="8" height="8" /><path d="M5 4.500h4M5 6.500h4M5 8.500h4" /></svg>
          </ViewBtn>
          <ViewBtn>
            <svg width="14" height="12" viewBox="0 0 14 12" fill="none" stroke="#666"><rect x=".5" y=".5" width="13" height="11" /><path d="M4.500 1v6h8M9 1v6" /></svg>
          </ViewBtn>
        </ViewGroup>
        <ZoomGroup>
          <Minus size={10} strokeWidth={3} />
          <ZoomSlider><ZoomKnob /></ZoomSlider>
          <Plus size={10} strokeWidth={3} />
        </ZoomGroup>
        <ZoomText>100%</ZoomText>
      </StatusBar>
      <BottomEdge />

      <Dialog>
        <DialogTitle>
          <Tight $ls={-1.1}>グラフの種類の変更</Tight>
          <DialogHelp>?</DialogHelp>
          <DialogClose><X size={19} strokeWidth={1} /></DialogClose>
        </DialogTitle>
        <DialogTabs>
          <DialogTab>おすすめグラフ</DialogTab>
          <DialogTab $active>すべてのグラフ</DialogTab>
        </DialogTabs>
        <DialogPanel>
          <ListColumn>
            {listItems.map(([k, label]) => (
              <ListItem key={k} $sel={k === "combo"}>
                <IconFrame>{icons[k]}</IconFrame>
                <Tight $ls={hasKana(label) ? -1.2 : 0}>{label}</Tight>
              </ListItem>
            ))}
          </ListColumn>
          <VDivider />
          <RightColumn>
            <TypeRow>
              <TypeButton><ComboTypeIcon kind={0} /></TypeButton>
              <TypeButton><ComboTypeIcon kind={1} /></TypeButton>
              <TypeButton><ComboTypeIcon kind={2} /></TypeButton>
              <TypeButton $sel><CustomComboIcon /></TypeButton>
            </TypeRow>
            <HRule />
            <Heading>ユーザー設定の組み合わせ</Heading>
            <Preview><PreviewChart /></Preview>
            <Badge $l={411} $t={101}>9</Badge>
            <SeriesLabel>データ系列に使用するグラフの種類と軸を選択してください:</SeriesLabel>
            <SeriesTable>
              <SeriesHeader>
                <HeaderCell $pl={7}>系列名</HeaderCell>
                <HeaderCell $pl={6} $sep><Tight $ls={-1.3}>グラフの種類</Tight></HeaderCell>
                <HeaderCell $pl={6} $sep>第 2 軸</HeaderCell>
              </SeriesHeader>
              <SeriesRow>
                <SeriesName><Swatch $c="#5b9bd5" />売上高</SeriesName>
                <Combo><ComboText><Tight $ls={-1.3}>マーカー付き折れ線</Tight></ComboText><ComboBtn><ChevronDown size={13} strokeWidth={1.2} /></ComboBtn></Combo>
                <CheckBox />
              </SeriesRow>
              <SeriesRow $sel>
                <SeriesName><Swatch $c="#ed7d31" />平均</SeriesName>
                <Combo $sel><ComboText $sel>折れ線</ComboText><ComboBtn $focus><ChevronDown size={13} strokeWidth={1.2} /></ComboBtn></Combo>
                <CheckBox />
              </SeriesRow>
            </SeriesTable>
            <Badge $l={333} $t={452} $small>10</Badge>
          </RightColumn>
        </DialogPanel>
        <DialogFooter>
          <OkButton>OK</OkButton>
          <CancelButton>キャンセル</CancelButton>
          <Grip />
        </DialogFooter>
      </Dialog>
    </Page>
  );
}
